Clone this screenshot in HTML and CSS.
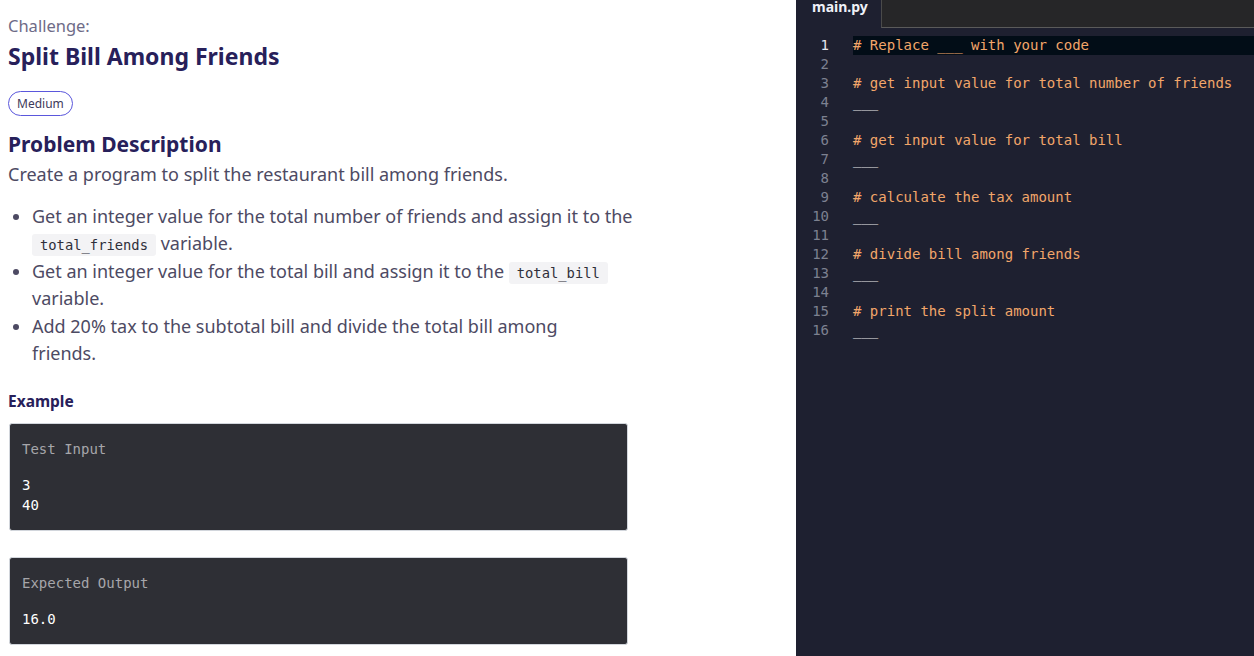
FILE: index.html
```html
<!DOCTYPE html>
<html>
<head>
<meta charset="utf-8">
<link rel="stylesheet" href="styles.css">
</head>
<body>
<div class="page">
  <main class="left">
    <div class="kicker">Challenge:</div>
    <h1 class="title">Split Bill Among Friends</h1>
    <div class="badges"><span class="badge">Medium</span></div>
    <h2 class="h2">Problem Description</h2>
    <p class="lead">Create a program to split the restaurant bill among friends.</p>
    <ul class="list">
      <li>Get an integer value for the total number of friends and assign it to the <code class="ic">total_friends</code> variable.</li>
      <li>Get an integer value for the total bill and assign it to the <code class="ic">total_bill</code> variable.</li>
      <li>Add 20% tax to the subtotal bill and divide the total bill among<br>friends.</li>
    </ul>
    <h3 class="h3">Example</h3>
    <div class="box">
      <div class="label">Test Input</div>
      <pre class="vals">3
40</pre>
    </div>
    <div class="box">
      <div class="label">Expected Output</div>
      <pre class="vals">16.0</pre>
    </div>
  </main>
  <section class="editor">
    <div class="tabs">
      <div class="tab">main.py</div>
      <div class="tabrest"></div>
    </div>
    <div class="code">
      <div class="ln active"><span class="num">1</span><span class="src hl"><span class="cm"># Replace ___ with your code</span></span></div>
      <div class="ln"><span class="num">2</span><span class="src"></span></div>
      <div class="ln"><span class="num">3</span><span class="src"><span class="cm"># get input value for total number of friends</span></span></div>
      <div class="ln"><span class="num">4</span><span class="src">___</span></div>
      <div class="ln"><span class="num">5</span><span class="src"></span></div>
      <div class="ln"><span class="num">6</span><span class="src"><span class="cm"># get input value for total bill</span></span></div>
      <div class="ln"><span class="num">7</span><span class="src">___</span></div>
      <div class="ln"><span class="num">8</span><span class="src"></span></div>
      <div class="ln"><span class="num">9</span><span class="src"><span class="cm"># calculate the tax amount</span></span></div>
      <div class="ln"><span class="num">10</span><span class="src">___</span></div>
      <div class="ln"><span class="num">11</span><span class="src"></span></div>
      <div class="ln"><span class="num">12</span><span class="src"><span class="cm"># divide bill among friends</span></span></div>
      <div class="ln"><span class="num">13</span><span class="src">___</span></div>
      <div class="ln"><span class="num">14</span><span class="src"></span></div>
      <div class="ln"><span class="num">15</span><span class="src"><span class="cm"># print the split amount</span></span></div>
      <div class="ln"><span class="num">16</span><span class="src">___</span></div>
    </div>
  </section>
</div>
</body>
</html>
```
FILE: styles.css
```css
* { box-sizing: border-box; }
html, body { margin: 0; padding: 0; height: 100%; }
body { background: #fff; font-family: "Noto Sans", sans-serif; overflow: hidden; }
.page { display: flex; height: 656px; }
.left { width: 796px; flex: none; padding: 16px 0 0 8px; color: #4d4a63; }
.kicker { font-size: 16.5px; line-height: 20px; color: #6e6b87; }
.title { margin: 5px 0 0; font-size: 23px; line-height: 30px; font-weight: 700; color: #27205a; }
.badges { display: flex; margin-top: 20px; }
.badge { height: 25px; padding: 0 8px; border: 1px solid #5b57dc; border-radius: 13px; font-size: 12px; line-height: 23px; color: #3e3a5a; }
.h2 { margin: 14px 0 0; font-size: 21px; line-height: 28px; font-weight: 700; color: #27205a; }
.lead { margin: 3px 0 0; font-size: 18px; line-height: 26px; color: #4d4a63; }
.list { margin: 16px 0 0; padding: 0 0 0 24px; width: 630px; font-size: 18px; line-height: 27.4px; color: #4d4a63; }
.ic { font-family: "DejaVu Sans Mono", monospace; font-size: 13.8px; line-height: 16px; background: #f3f3f5; color: #2f2f3a; padding: 3px 8px; border-radius: 3px; }
.h3 { margin: 24px 0 0; font-size: 15.5px; line-height: 20px; font-weight: 700; color: #27205a; }
.box { margin-top: 12px; width: 619px; margin-left: 1px; background: #2e2f35; border: 1px solid #d2d6dc; border-radius: 3px; padding: 15px 12px; font-family: "DejaVu Sans Mono", monospace; font-size: 14px; line-height: 20px; }
.box + .box { margin-top: 26px; }
.label { color: #a6a6aa; }
.vals { margin: 16px 0 0; font: inherit; color: #ffffff; }
.editor { flex: 1; background: #1e2030; display: flex; flex-direction: column; }
.tabs { display: flex; height: 28px; flex: none; }
.tab { width: 85px; padding-left: 16px; font-family: "Noto Sans", sans-serif; font-weight: 700; font-size: 14px; line-height: 14px; color: #eef0f8; background: #1e2030; }
.tabrest { flex: 1; background: #262628; border-left: 1px solid #4a4a4a; border-bottom: 1px solid #5a5a5a; }
.code { padding-top: 8px; font-family: "DejaVu Sans Mono", monospace; font-size: 14px; line-height: 19px; }
.ln { display: flex; height: 19px; }
.num { width: 33px; text-align: right; color: #7d8190; flex: none; }
.active .num { color: #e4e6ee; }
.src { margin-left: 24px; flex: 1; color: #e8e8e8; white-space: pre; }
.src.hl { background: #020d17; }
.cm { color: #f2a66a; }
```
